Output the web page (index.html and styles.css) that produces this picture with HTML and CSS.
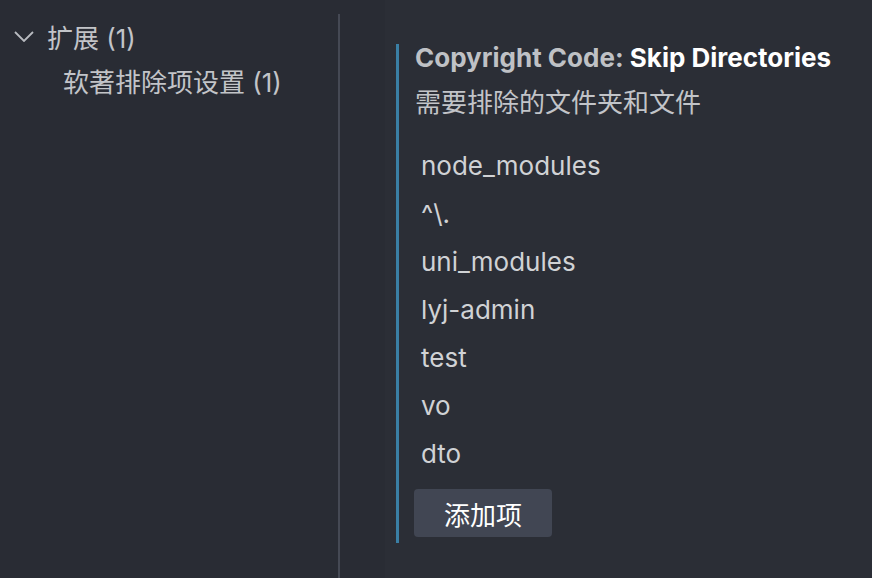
FILE: index.html
```html
<!DOCTYPE html>
<html lang="zh">
<head>
<meta charset="utf-8">
<link rel="stylesheet" href="styles.css">
</head>
<body>
<div class="app">
  <aside class="tree">
    <div class="row row-top">
      <svg class="chev" width="20" height="11" viewBox="0 0 20 11"><path d="M1 1 L10 10 L19 1" fill="none" stroke="#b8bbc0" stroke-width="1.8"/></svg>
      <span class="label">扩展 (1)</span>
    </div>
    <div class="row row-sub"><span class="label">软著排除项设置 (1)</span></div>
  </aside>
  <div class="sash"></div>
  <div class="gutter"></div>
  <main class="editor">
    <section class="setting">
      <div class="title"><span class="cat">Copyright Code: </span><span class="name">Skip Directories</span></div>
      <div class="desc">需要排除的文件夹和文件</div>
      <ul class="list">
        <li>node_modules</li>
        <li>^\.</li>
        <li>uni_modules</li>
        <li>lyj-admin</li>
        <li>test</li>
        <li>vo</li>
        <li>dto</li>
      </ul>
      <button class="add">添加项</button>
    </section>
  </main>
</div>
</body>
</html>
```
FILE: styles.css
```css
html, body {
  margin: 0;
  padding: 0;
  height: 100%;
  background: #292c34;
  font-family: Inter, "Noto Sans CJK SC", sans-serif;
  color: #c8cacd;
}
.app {
  display: flex;
  height: 578px;
  overflow: hidden;
}
.tree {
  width: 338px;
  padding-top: 14px;
  box-sizing: border-box;
}
.row {
  display: flex;
  align-items: center;
  height: 44px;
  font-size: 26px;
  color: #c2c4c8;
}
.row-top {
  padding-left: 14px;
}
.chev {
  margin-right: 13px;
}
.row-sub {
  padding-left: 63px;
}
.sash {
  width: 2px;
  margin-top: 14px;
  background: #454954;
}
.gutter {
  width: 45px;
}
.editor {
  flex: 1;
  background: #2b2e36;
  padding-left: 11px;
  padding-top: 44px;
}
.setting {
  border-left: 3px solid #3a7fa5;
  padding-left: 16px;
  padding-bottom: 6px;
  width: 440px;
}
.title {
  font-size: 26px;
  font-weight: 700;
  line-height: 28px;
}
.title .cat { color: #bfc1c5; }
.title .name { color: #ffffff; }
.desc {
  margin-top: 17px;
  font-size: 26px;
  line-height: 28px;
  color: #c2c4c8;
}
.list {
  list-style: none;
  margin: 25px 0 0;
  padding: 0;
}
.list li {
  height: 48px;
  line-height: 48px;
  padding-left: 6px;
  font-size: 26px;
  color: #d0d2d5;
}
.add {
  display: block;
  margin-top: 11px;
  margin-left: -1px;
  width: 138px;
  height: 48px;
  border: 0;
  border-radius: 4px;
  background: #414653;
  color: #ffffff;
  font-family: inherit;
  font-size: 26px;
  padding: 0;
}
```
